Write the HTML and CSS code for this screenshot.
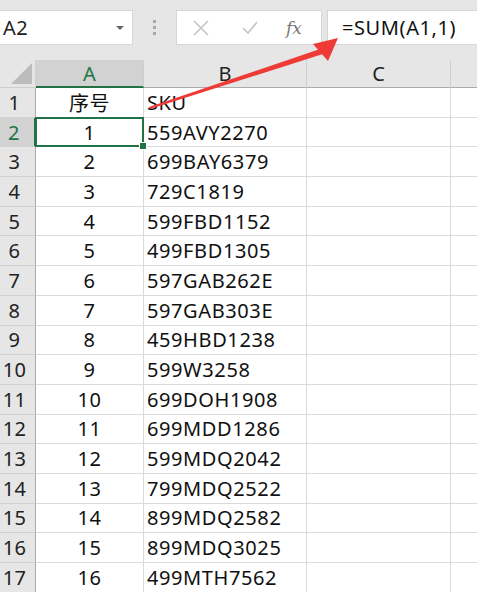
FILE: index.html
```html
<!DOCTYPE html>
<html>
<head>
<meta charset="utf-8">
<link rel="stylesheet" href="styles.css">
</head>
<body>
<div class="app">
  <div class="toolbar">
    <div class="namebox"><span class="ref">A2</span><span class="dd"></span></div>
    <div class="sep"><i></i><i></i><i></i></div>
    <div class="fxbox">
      <svg class="ico" width="20" height="20" viewBox="0 0 20 20"><path d="M3 3 L17 17 M17 3 L3 17" stroke="#c4c4c4" stroke-width="1.6" fill="none"/></svg>
      <svg class="ico" width="20" height="20" viewBox="0 0 20 20"><path d="M3 10 L8 15 L17 4" stroke="#c4c4c4" stroke-width="1.6" fill="none"/></svg>
      <span class="fx">fx</span>
    </div>
    <div class="formula">=SUM(A1,1)</div>
  </div>
  <div class="grid">
    <div class="corner"><span class="tri"></span></div>
    <div class="ch sel">A</div>
    <div class="ch">B</div>
    <div class="ch">C</div>
    <div class="ch last"></div>

    <div class="rh">1</div><div class="c num">序号</div><div class="c txt">SKU</div><div class="c"></div><div class="c last"></div>
    <div class="rh sel">2</div><div class="c num active">1</div><div class="c txt">559AVY2270</div><div class="c"></div><div class="c last"></div>
    <div class="rh">3</div><div class="c num">2</div><div class="c txt">699BAY6379</div><div class="c"></div><div class="c last"></div>
    <div class="rh">4</div><div class="c num">3</div><div class="c txt">729C1819</div><div class="c"></div><div class="c last"></div>
    <div class="rh">5</div><div class="c num">4</div><div class="c txt">599FBD1152</div><div class="c"></div><div class="c last"></div>
    <div class="rh">6</div><div class="c num">5</div><div class="c txt">499FBD1305</div><div class="c"></div><div class="c last"></div>
    <div class="rh">7</div><div class="c num">6</div><div class="c txt">597GAB262E</div><div class="c"></div><div class="c last"></div>
    <div class="rh">8</div><div class="c num">7</div><div class="c txt">597GAB303E</div><div class="c"></div><div class="c last"></div>
    <div class="rh">9</div><div class="c num">8</div><div class="c txt">459HBD1238</div><div class="c"></div><div class="c last"></div>
    <div class="rh">10</div><div class="c num">9</div><div class="c txt">599W3258</div><div class="c"></div><div class="c last"></div>
    <div class="rh">11</div><div class="c num">10</div><div class="c txt">699DOH1908</div><div class="c"></div><div class="c last"></div>
    <div class="rh">12</div><div class="c num">11</div><div class="c txt">699MDD1286</div><div class="c"></div><div class="c last"></div>
    <div class="rh">13</div><div class="c num">12</div><div class="c txt">599MDQ2042</div><div class="c"></div><div class="c last"></div>
    <div class="rh">14</div><div class="c num">13</div><div class="c txt">799MDQ2522</div><div class="c"></div><div class="c last"></div>
    <div class="rh">15</div><div class="c num">14</div><div class="c txt">899MDQ2582</div><div class="c"></div><div class="c last"></div>
    <div class="rh">16</div><div class="c num">15</div><div class="c txt">899MDQ3025</div><div class="c"></div><div class="c last"></div>
    <div class="rh">17</div><div class="c num">16</div><div class="c txt">499MTH7562</div><div class="c"></div><div class="c last"></div>
  </div>
  <svg class="arrow" width="477" height="592" viewBox="0 0 477 592">
    <polygon points="150,109 149,107 320,49 323,54" fill="#ef3b36"/>
    <polygon points="338,38 313,44 328,61" fill="#ef3b36"/>
  </svg>
</div>
</body>
</html>
```
FILE: styles.css
```css
html, body {
  margin: 0;
  padding: 0;
  background: #e6e6e6;
}
.app {
  position: relative;
  width: 477px;
  height: 592px;
  overflow: hidden;
  font-family: "Noto Sans", "Noto Sans CJK SC", sans-serif;
  color: #111;
}
.toolbar {
  height: 60px;
  box-sizing: border-box;
  padding-top: 10px;
  display: flex;
  align-items: flex-start;
}
.namebox {
  width: 133px;
  height: 35px;
  box-sizing: border-box;
  background: #fff;
  border: 1px solid #d6d6d6;
  border-left: none;
  display: flex;
  align-items: center;
  justify-content: space-between;
  padding: 0 8px 0 3px;
}
.ref {
  font-size: 20px;
  letter-spacing: 0.4px;
  color: #222;
}
.dd {
  width: 0;
  height: 0;
  border-left: 4px solid transparent;
  border-right: 4px solid transparent;
  border-top: 4px solid #666;
  margin-top: 1px;
}
.sep {
  width: 43px;
  height: 35px;
  display: flex;
  flex-direction: column;
  align-items: center;
  justify-content: center;
  gap: 3px;
}
.sep i {
  display: block;
  width: 3px;
  height: 3px;
  background: #a8a8a8;
}
.fxbox {
  width: 146px;
  height: 35px;
  box-sizing: border-box;
  background: #fff;
  border: 1px solid #d6d6d6;
  display: flex;
  align-items: center;
  padding-left: 14px;
  gap: 29px;
}
.fx {
  font-family: "DejaVu Serif", "Liberation Serif", serif;
  font-style: italic;
  font-size: 17px;
  color: #777;
  margin-left: -3px;
}
.formula {
  flex: 1;
  margin-left: 5px;
  height: 35px;
  box-sizing: border-box;
  background: #fff;
  border: 1px solid #d6d6d6;
  border-right: none;
  font-size: 20px;
  letter-spacing: 0.6px;
  line-height: 33px;
  padding-left: 14px;
  color: #111;
}
.grid {
  display: grid;
  grid-template-columns: 36px 108px 163px 144px 26px;
  grid-template-rows: 28px repeat(17, 29.7px);
  background: #fff;
}
.corner {
  position: relative;
  background: #e6e6e6;
  border-right: 1px solid #cfcfcf;
  border-bottom: 1px solid #cfcfcf;
}
.tri {
  position: absolute;
  right: 3px;
  bottom: 3px;
  width: 0;
  height: 0;
  border-left: 21px solid transparent;
  border-bottom: 21px solid #bcbcbc;
}
.ch {
  background: #e6e6e6;
  border-right: 1px solid #cfcfcf;
  border-bottom: 1px solid #ababab;
  display: flex;
  align-items: center;
  justify-content: center;
  font-size: 20px;
  color: #222;
}
.ch.sel {
  background: #d2d2d2;
  color: #217346;
  border-bottom: 2px solid #217346;
}
.ch.last, .c.last {
  border-right: none;
}
.rh {
  background: #e6e6e6;
  border-right: 1px solid #ababab;
  border-bottom: 1px solid #d2d2d2;
  display: flex;
  align-items: center;
  justify-content: center;
  padding-right: 6px;
  font-size: 20px;
  letter-spacing: 0.4px;
  color: #222;
}
.rh.sel {
  background: #d2d2d2;
  color: #217346;
  border-right: 2px solid #217346;
}
.c {
  position: relative;
  background: #fff;
  border-right: 1px solid #dadada;
  border-bottom: 1px solid #dadada;
  display: flex;
  align-items: center;
  font-size: 20px;
  letter-spacing: 0.6px;
  color: #111;
  white-space: nowrap;
}
.c.num {
  justify-content: center;
}
.c.txt {
  padding-left: 3px;
}
.c.active::after {
  content: "";
  position: absolute;
  left: -1px;
  top: -1px;
  right: -1px;
  bottom: -1px;
  border: 2px solid #217346;
}
.c.active::before {
  content: "";
  position: absolute;
  right: -4px;
  bottom: -4px;
  width: 6px;
  height: 6px;
  background: #217346;
  border: 1px solid #fff;
  z-index: 2;
}
.arrow {
  position: absolute;
  left: 0;
  top: 0;
  pointer-events: none;
}
```
